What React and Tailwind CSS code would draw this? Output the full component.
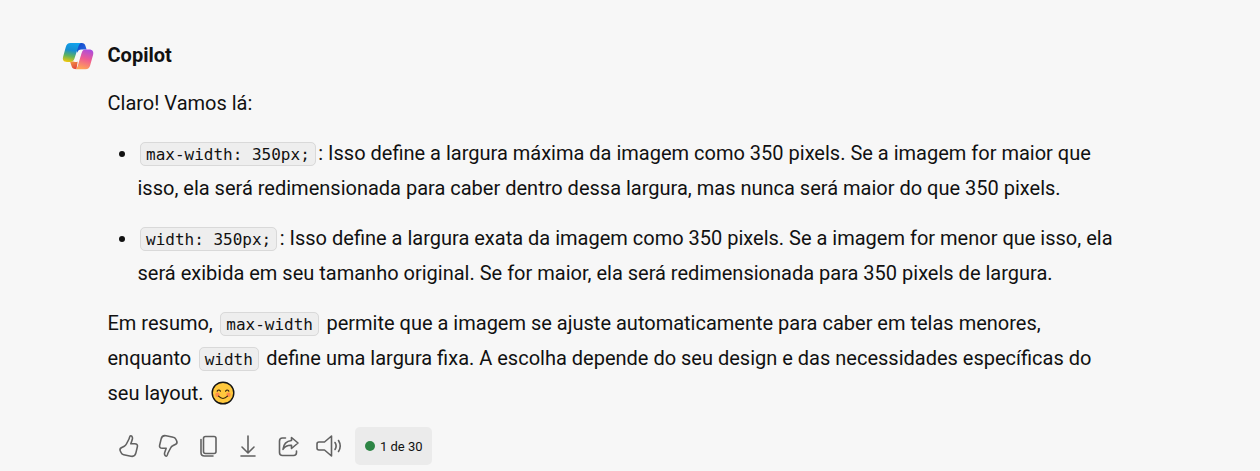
import React from "react";

function Code({ children }) {
  return (
    <code className="mx-[2.500px] rounded-[5px] border border-[#d9d9d9] bg-[#eeeeee] px-[5px] pb-[1px] pt-[2px] font-['DejaVu_Sans_Mono',monospace] text-[16px] leading-none">
      {children}
    </code>
  );
}

function CopilotLogo() {
  return (
    <svg className="mb-[2px]" width="32" height="30" viewBox="0 0 32 30" fill="none">
      <defs>
        <linearGradient id="blue" x1="10" y1="2" x2="6" y2="22" gradientUnits="userSpaceOnUse">
          <stop stopColor="#12a4ee" />
          <stop offset=".4" stopColor="#168ed1" />
          <stop offset=".7" stopColor="#62b35a" />
          <stop offset="1" stopColor="#f1c80c" />
        </linearGradient>
        <linearGradient id="pink" x1="26" y1="9" x2="20" y2="29" gradientUnits="userSpaceOnUse">
          <stop stopColor="#a84be2" />
          <stop offset=".5" stopColor="#ef5c91" />
          <stop offset="1" stopColor="#ffa456" />
        </linearGradient>
        <linearGradient id="navy" x1="17" y1="3" x2="24" y2="9" gradientUnits="userSpaceOnUse">
          <stop stopColor="#1248c8" />
          <stop offset="1" stopColor="#2464e0" />
        </linearGradient>
        <linearGradient id="orange" x1="9" y1="21" x2="13" y2="29" gradientUnits="userSpaceOnUse">
          <stop stopColor="#f49a42" />
          <stop offset="1" stopColor="#e0443e" />
        </linearGradient>
      </defs>
      <path d="M14 3h5.800c2 0 3 1 3.600 2.800l1.200 3.700h-5.300c-2.300 0-3.300 1.200-4 3.400z" fill="url(#navy)" />
      <path d="M16 19.500l-1.500 9.500h-1.500c-1.900 0-2.800-1-3.400-2.800L8 21.500h4c2 0 3-.6 4-2z" fill="url(#orange)" />
      <path d="M8.500 3h10.600c-1.300.5-2 1.500-2.500 3.100L12.300 19c-.7 2-1.900 3-4.200 3H5c-3.500 0-4.700-2-3.900-5.200L3.800 7c.7-2.700 2-4 4.700-4z" fill="url(#blue)" />
      <path d="M23.500 29.200H13.200c1.400-.5 2-1.600 2.500-3.200l3.900-13.100c.7-2.300 1.900-3.400 4.200-3.400h3.400c3.400 0 4.700 2.100 3.900 5.300l-2.900 10.400c-.7 2.700-2 4-4.700 4z" fill="url(#pink)" />
      <path d="M20.300 10.300h-1.500c-1.700 0-2.700.8-3.200 2.500L13 20.200c-.4 1-.8 1.500-1.500 1.900h2.700c1.400 0 2.200-.8 2.700-2.300l2.400-7.500c.3-.9.600-1.500 1-2z" fill="#f7f7f7" />
    </svg>
  );
}

function Smile() {
  return (
    <svg className="ml-[2px] inline-block align-[-5px]" width="24" height="24" viewBox="0 0 24 24" fill="none">
      <circle cx="12" cy="12" r="10.800" fill="#ffc83d" stroke="#141414" strokeWidth="1.400" />
      <circle cx="6.500" cy="13.700" r="2.200" fill="#ff8c4a" />
      <circle cx="17.500" cy="13.700" r="2.200" fill="#ff8c4a" />
      <path d="M6.200 10.200q1.600-2.400 3.200 0M14.600 10.200q1.600-2.400 3.200 0M7.500 15.200q4.500 4.600 9 0" stroke="#352510" strokeWidth="1.200" strokeLinecap="round" />
    </svg>
  );
}

function Icon({ children }) {
  return (
    <svg width="28" height="28" viewBox="0 0 28 28" fill="none" stroke="#626262" strokeWidth="1.600" strokeLinecap="round" strokeLinejoin="round">
      {children}
    </svg>
  );
}

const thumb =
  "M15.800 3.800c1.600.3 2 2 1.500 3.800l-1.500 4.100h4c1.900 0 3 1.200 2.600 3l-1.500 6.200c-.6 2.700-2.500 3.800-5 3.300l-7.200-1.500c-1.100-.2-1.900-.7-2.400-1.700l-1-2c-.6-1.300-.2-2.500 1-3.200l3-1.600c1-.5 1.600-1.200 2.100-2.200l2.600-5c.6-1.200.5-3.400 1.800-3.200z";

export default function App() {
  return (
    <main className="h-[471px] w-full overflow-hidden bg-[#f7f7f7] pl-[62px] pt-[38px] font-[Roboto,sans-serif] text-[20px] leading-[35px] text-[#111]">
      <header className="flex h-[35px] items-center">
        <CopilotLogo />
        <h1 className="ml-[13.500px] text-[20px] font-bold">Copilot</h1>
      </header>
      <div className="ml-[45.500px] mt-[13px] flex flex-col gap-[15px] whitespace-nowrap">
        <p>Claro! Vamos lá:</p>
        <ul className="flex list-outside list-disc flex-col gap-[15px] pl-[30px]">
          <li>
            <Code>max-width: 350px;</Code>: Isso define a largura máxima da imagem como 350 pixels. Se a imagem for maior que
            <br />
            isso, ela será redimensionada para caber dentro dessa largura, mas nunca será maior do que 350 pixels.
          </li>
          <li>
            <Code>width: 350px;</Code>: Isso define a largura exata da imagem como 350 pixels. Se a imagem for menor que isso, ela
            <br />
            será exibida em seu tamanho original. Se for maior, ela será redimensionada para 350 pixels de largura.
          </li>
        </ul>
        <p>
          Em resumo, <Code>max-width</Code> permite que a imagem se ajuste automaticamente para caber em telas menores,
          <br />
          enquanto <Code>width</Code> define uma largura fixa. A escolha depende do seu design e das necessidades específicas do
          <br />
          seu layout. <Smile />
        </p>
      </div>
      <footer className="ml-[53px] mt-[16px] flex h-[38px] items-center gap-[12px]">
        <Icon><path d={thumb} /></Icon>
        <Icon><path d={thumb} transform="rotate(180 13.500 14)" /></Icon>
        <Icon>
          <rect x="8.500" y="4.500" width="12.500" height="17" rx="2" />
          <path d="M6 7.500v13c0 2.500 1 3.500 3.500 3.500H18" />
        </Icon>
        <Icon><path d="M13 4v16.500M7 15l6 6 6-6M6 24h14" /></Icon>
        <Icon>
          <path d="M10.500 6H7.500c-2 0-3 1-3 3v11.500c0 2 1 3 3 3h11c2 0 3-1 3-3v-1.500" />
          <path d="M16.500 5.500l6.500 5.500-6.500 5.500v-3.200c-4-.2-6.500 1-8.500 4 .5-5 3.500-8.300 8.500-8.800z" />
        </Icon>
        <Icon>
          <path d="M16.500 4v20l-7-6H4c-1.500 0-2-.5-2-2v-4c0-1.500.5-2 2-2h5.500zM20 10.500c1.500 2.300 1.500 4.700 0 7M23.500 8.500c2.300 3.700 2.300 7.300 0 11" />
        </Icon>
        <div className="flex h-[38px] w-[77px] items-center gap-[5px] rounded-[5px] bg-[#ebebeb] pl-[10px] text-[13px] leading-none">
          <span className="size-[10px] rounded-full bg-[#2d8545]" />
          <span>1 de 30</span>
        </div>
      </footer>
    </main>
  );
}
